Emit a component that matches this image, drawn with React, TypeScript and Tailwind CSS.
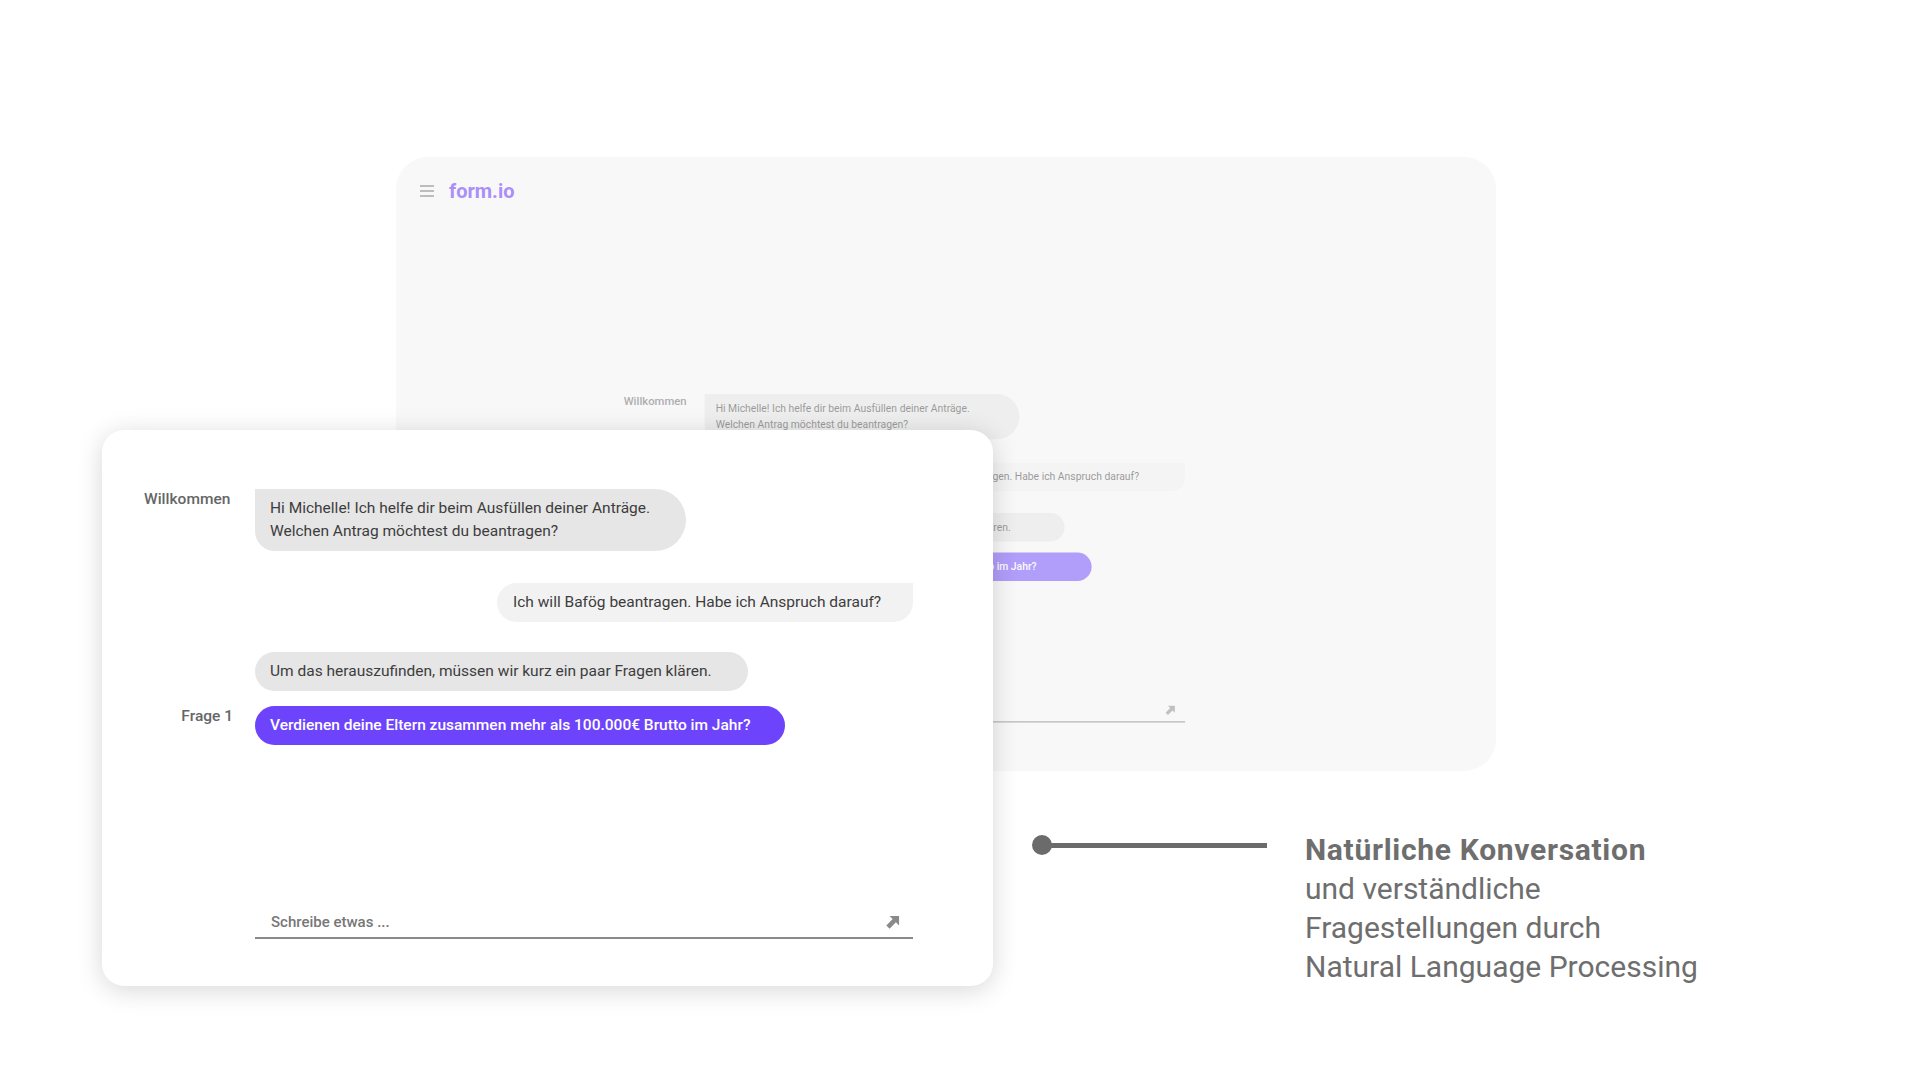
import React from "react";

const font = { fontFamily: "Roboto, 'Noto Sans', sans-serif" };

function ArrowIcon({ color = "#8a8a8a", size = 14 }: { color?: string; size?: number }) {
  return (
    <svg width={size} height={size} viewBox="0 0 12 12">
      <path d="M3 0.8 H11.2 V9 L8.5 6.3 L3.1 11.7 L0.3 8.9 L5.7 3.5 Z" fill={color} />
    </svg>
  );
}

function ChatContent({ back = false }: { back?: boolean }) {
  const txt = back
    ? "text-[14.2px] leading-[23px] text-[#3d3d3d]"
    : "text-[15.5px] leading-[23px] text-[#3d3d3d]";
  const txtPurple = back
    ? "text-[14.2px] font-medium leading-[23px] text-white"
    : "text-[15.5px] font-medium leading-[23px] text-white";
  return (
    <div className="flex h-[556px] w-[891px] flex-col pl-[42px] pr-[80px] pt-[59px]">
      <div className="grid grid-cols-[86px_1fr] items-start gap-x-[25px]">
        <div className="text-right text-[15.5px] font-medium leading-[20px] text-[#666666]">Willkommen</div>
        <div className="flex">
          <div className={"w-[431px] rounded-[0_31px_31px_20px] bg-[#e6e6e6] py-2 pl-[15px] " + txt}>
            Hi Michelle! Ich helfe dir beim Ausfüllen deiner Anträge.
            <br />
            Welchen Antrag möchtest du beantragen?
          </div>
        </div>
      </div>
      <div className="mt-[32px] flex justify-end">
        <div className={"w-[416px] rounded-[20px_0_20px_20px] bg-[#f2f2f2] py-2 pl-4 " + txt}>
          Ich will Bafög beantragen. Habe ich Anspruch darauf?
        </div>
      </div>
      <div className="mt-[30px] grid grid-cols-[86px_1fr] items-start gap-x-[25px]">
        <div />
        <div className="flex">
          <div className={"w-[493px] rounded-[20px] bg-[#e6e6e6] py-2 pl-[15px] " + txt}>
            Um das herauszufinden, müssen wir kurz ein paar Fragen klären.
          </div>
        </div>
      </div>
      <div className="mt-[15px] grid grid-cols-[86px_1fr] items-start gap-x-[25px]">
        <div className="text-right text-[15.5px] font-medium leading-[20px] text-[#666666]">
          <span className="relative left-[3px]">Frage 1</span>
        </div>
        <div className="flex">
          <div className={"w-[530px] rounded-[20px] bg-[#6d44fc] py-2 pl-[15px] " + txtPurple}>
            Verdienen deine Eltern zusammen mehr als 100.000€ Brutto im Jahr?
          </div>
        </div>
      </div>
      <div className="mb-[47px] mt-auto grid grid-cols-[86px_1fr] gap-x-[25px]">
        <div />
        <div className="flex h-[32px] items-center justify-between border-b-2 border-[#8a8a8a] pl-4 pr-[13px]">
          <span className="text-[15px] font-medium text-[#777777]">{back ? "" : "Schreibe etwas ..."}</span>
          <ArrowIcon />
        </div>
      </div>
    </div>
  );
}

export default function App() {
  return (
    <div className="relative h-[1080px] w-full overflow-hidden bg-white" style={font}>
      <div className="ml-[396px] mt-[157px] h-[614px] w-[1100px] overflow-hidden rounded-[32px] bg-[#f8f8f8]">
        <div className="flex h-[68px] items-center gap-[15px] pl-[24px]">
          <div className="flex w-[14px] flex-col gap-[3px]">
            <div className="h-[2px] bg-[#bdbdbd]" />
            <div className="h-[2px] bg-[#bdbdbd]" />
            <div className="h-[2px] bg-[#bdbdbd]" />
          </div>
          <span className="text-[20px] font-bold text-[#a98ffa]">form.io</span>
        </div>
        <div className="ml-[197px] mt-[126px] h-[406px] w-[650px]">
          <div className="origin-top-left scale-[0.73] opacity-50">
            <ChatContent back />
          </div>
        </div>
      </div>

      <div className="absolute left-[102px] top-[430px] h-[556px] w-[891px] rounded-[22px] bg-white shadow-[0_4px_26px_rgba(0,0,0,0.16)]">
        <ChatContent />
      </div>

      <div className="ml-[1032px] mt-[59px] flex items-start">
        <div className="mt-[5px] flex w-[235px] items-center">
          <div className="h-[20px] w-[20px] shrink-0 rounded-full bg-[#6b6b6b]" />
          <div className="-ml-[2px] h-[5px] flex-1 bg-[#6b6b6b]" />
        </div>
        <div className="ml-[38px] text-[30px] leading-[39px] text-[#6e6e6e]">
          <div className="font-bold tracking-[0.7px]">Natürliche Konversation</div>
          <div>und verständliche</div>
          <div>Fragestellungen durch</div>
          <div>Natural Language Processing</div>
        </div>
      </div>
    </div>
  );
}
